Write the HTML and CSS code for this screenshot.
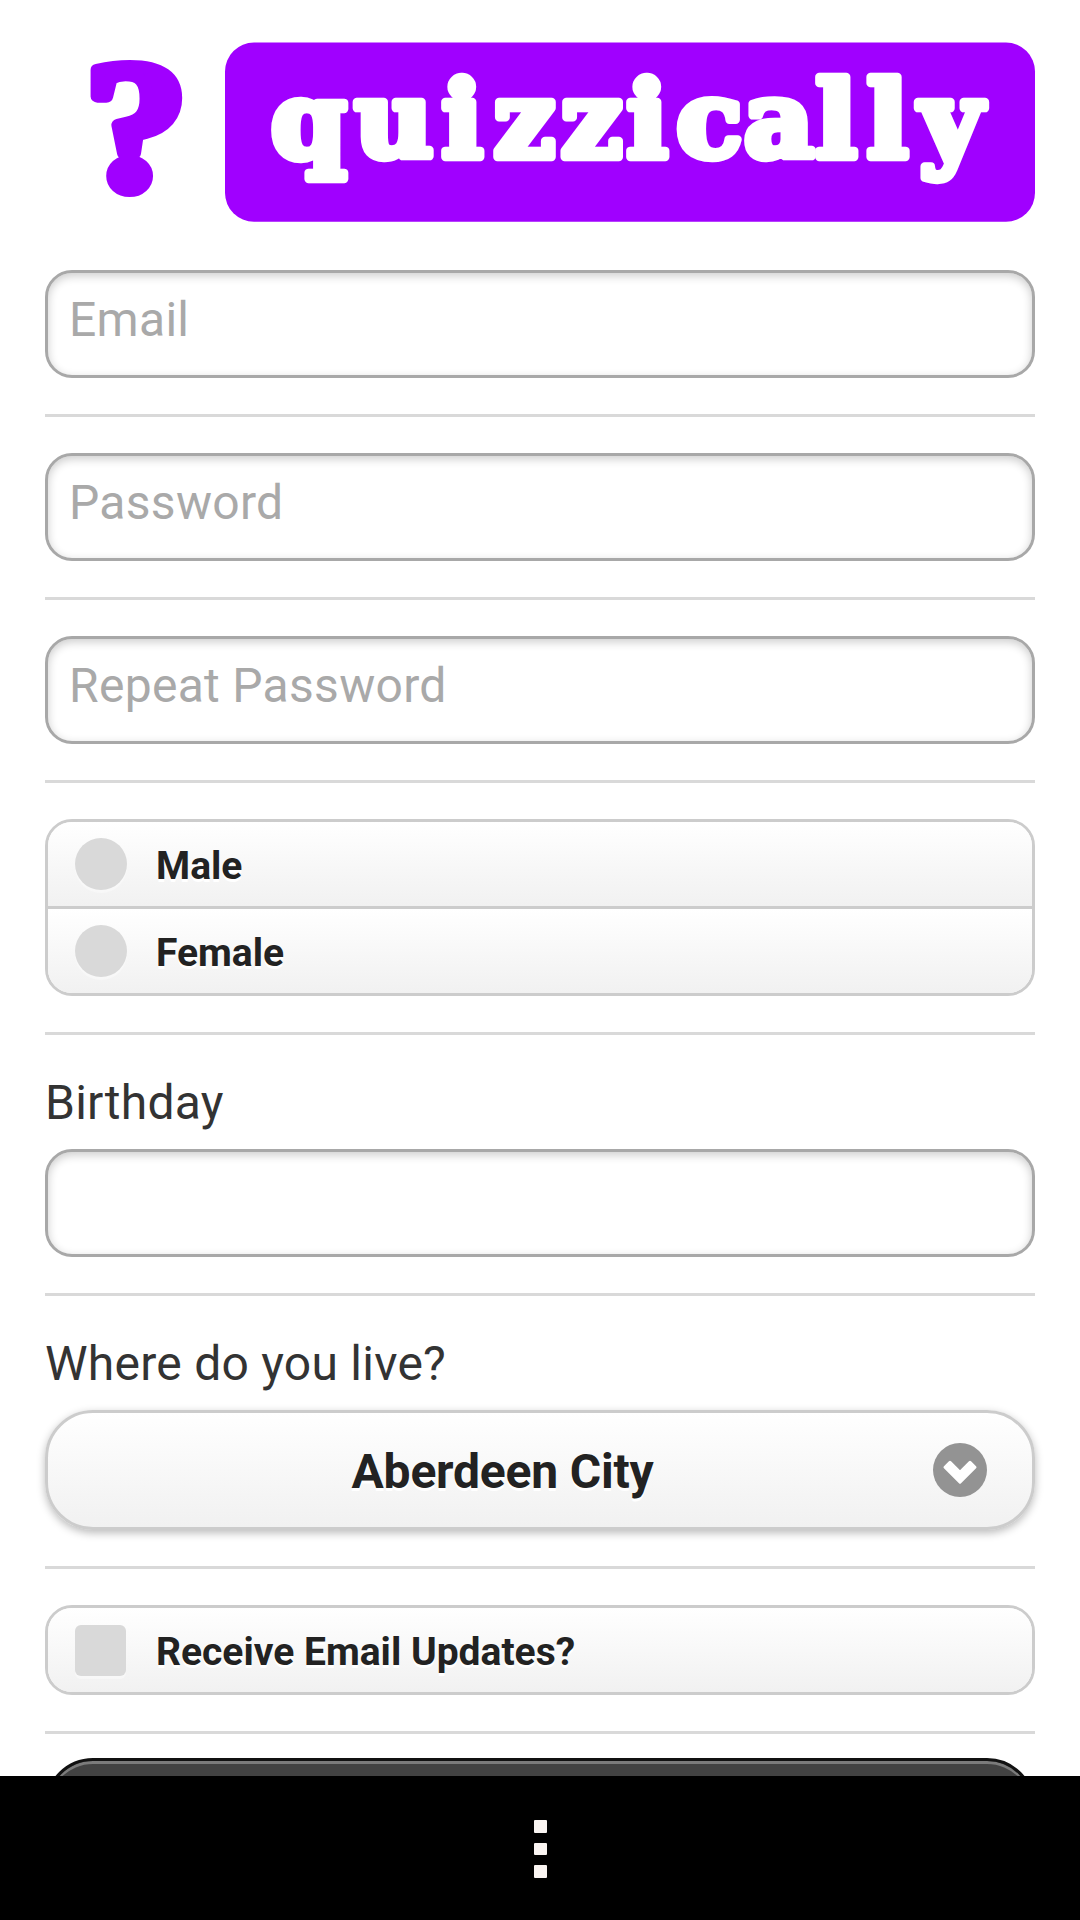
FILE: index.html
```html
<!DOCTYPE html>
<html lang="en">
<head>
<meta charset="utf-8">
<title>quizzically</title>
<link rel="stylesheet" href="styles.css">
</head>
<body>
<main class="page">
  <svg class="logo" viewBox="45 43 990 179" role="img" aria-label="quizzically">
    <rect class="logo-box" x="225" y="42.5" width="810" height="179.3" rx="29"/>
    <text class="logo-mark" transform="translate(85 187.5) scale(1.14 1.02)">?</text>
    <text class="logo-word" transform="translate(270 157) scale(1.07 1.035)" x="1 79 160.5 209 272 333.5 380 443 510 558 607">quizzically</text>
  </svg>
  <form class="form">
    <input class="field" type="text" placeholder="Email">
    <hr class="rule">
    <input class="field" type="text" placeholder="Password">
    <hr class="rule">
    <input class="field" type="text" placeholder="Repeat Password">
    <hr class="rule">
    <div class="group">
      <div class="option"><span class="dot"></span><span class="option-text">Male</span></div>
      <div class="option"><span class="dot"></span><span class="option-text">Female</span></div>
    </div>
    <hr class="rule">
    <label class="label">Birthday</label>
    <input class="field" type="text">
    <hr class="rule">
    <label class="label">Where do you live?</label>
    <div class="select">
      <span class="select-text">Aberdeen City</span>
      <svg class="select-icon" viewBox="0 0 54 54">
        <circle cx="27" cy="27" r="27" fill="#939393"/>
        <path d="M12 24.3 17 19.3 27 29.3 37 19.3 42 24.3 27 39.2z" fill="#fff" stroke="#fff" stroke-width="3" stroke-linejoin="round"/>
      </svg>
    </div>
    <hr class="rule">
    <div class="group">
      <div class="option"><span class="dot box"></span><span class="option-text">Receive Email Updates?</span></div>
    </div>
    <hr class="rule">
    <div class="submit"></div>
  </form>
</main>
<nav class="navbar">
  <span class="pip"></span><span class="pip"></span><span class="pip"></span>
</nav>
</body>
</html>
```
FILE: styles.css
```css
* { box-sizing: border-box; }
body {
  margin: 0;
  width: 1080px;
  height: 1920px;
  overflow: hidden;
  display: flex;
  flex-direction: column;
  background: #fff;
  font-family: Roboto, "Liberation Sans", sans-serif;
  color: #333;
}
.page {
  height: 1776px;
  flex: none;
  overflow: hidden;
  padding: 43px 45px 0;
}
.logo { display: block; width: 990px; height: 179px; overflow: visible; }
.logo-box { fill: #a000ff; }
.logo-mark, .logo-word { font-weight: 700; stroke-linejoin: round; }
.logo-mark {
  font-family: "Liberation Serif", serif;
  font-size: 180px;
  fill: #a000ff;
  stroke: #a000ff;
  stroke-width: 12px;
}
.logo-word {
  font-family: "DejaVu Serif", serif;
  font-size: 101px;
  fill: #fff;
  stroke: #fff;
  stroke-width: 8px;
}
.form { display: flex; flex-direction: column; padding-top: 48px; }
.field {
  height: 108px;
  width: 100%;
  border: 3px solid #a8a8a8;
  border-radius: 27px;
  padding: 0 21px 10px;
  font: 48px/56px Roboto, "Liberation Sans", sans-serif;
  letter-spacing: .3px;
  color: #333;
  background: #fff;
  box-shadow: inset 0 3px 10px rgba(0, 0, 0, .2);
  outline: 0;
}
.field::placeholder { color: #a9a9a9; opacity: 1; }
.rule { width: 100%; height: 3px; border: 0; margin: 36px 0; background: #d9d9d9; flex: none; }
.group { border: 3px solid #ccc; border-radius: 27px; overflow: hidden; }
.option {
  height: 84px;
  display: flex;
  align-items: center;
  gap: 29px;
  padding-left: 27px;
  background: linear-gradient(#fff, #f1f1f1);
}
.option + .option { height: 87px; border-top: 3px solid #ccc; }
.dot {
  width: 52px;
  height: 52px;
  border-radius: 50%;
  background: #d9d9d9;
  box-shadow: 0 3px 1px rgba(255, 255, 255, .4);
}
.dot.box { width: 51px; height: 51px; border-radius: 6px; margin-right: 1px; }
.option-text, .select-text { color: #222; font-weight: 700; text-shadow: 0 3px 0 #fff; }
.option-text { font-size: 39px; line-height: 44px; padding-top: 4px; }
.label { height: 66px; margin-bottom: 12px; padding-top: 4px; font-size: 48px; line-height: 56px; letter-spacing: .25px; }
.select {
  height: 120px;
  border: 3px solid #ccc;
  border-radius: 48px;
  display: flex;
  align-items: center;
  padding: 0 45px 0 24px;
  background: linear-gradient(#fff, #f1f1f1);
  box-shadow: 0 3px 8px rgba(0, 0, 0, .27);
}
.select-text { flex: 1; padding-top: 4px; text-align: center; font-size: 48px; line-height: 56px; letter-spacing: -.2px; }
.select-icon { width: 54px; height: 54px; }
.submit {
  height: 120px;
  margin-top: -12px;
  border: 3px solid #111;
  border-radius: 48px;
  background: #424242;
  box-shadow: inset 0 3px 0 #7b7b7b;
}
.navbar {
  height: 144px;
  background: #000;
  display: flex;
  flex-direction: column;
  align-items: center;
  padding: 44px 0 0 1px;
  gap: 10px;
}
.pip { width: 12.5px; height: 12.5px; border-radius: 1px; background: #faf5f2; }
```
